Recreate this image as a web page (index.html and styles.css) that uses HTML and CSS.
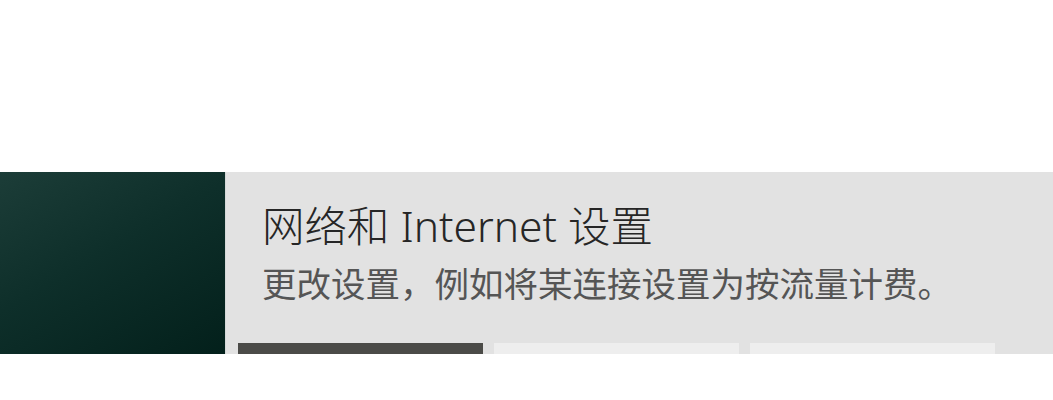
FILE: index.html
```html
<!DOCTYPE html>
<html lang="zh-CN">
<head>
<meta charset="utf-8">
<title>网络和 Internet 设置</title>
<link rel="stylesheet" href="styles.css">
</head>
<body>
<div class="top-space"></div>
<section class="banner">
  <div class="hero"></div>
  <div class="content">
    <h1 class="title">网络和 Internet 设置</h1>
    <p class="subtitle">更改设置，例如将某连接设置为按流量计费。</p>
    <div class="tiles">
      <div class="tile tile-dark"></div>
      <div class="tile tile-light"></div>
      <div class="tile tile-light"></div>
    </div>
  </div>
</section>
</body>
</html>
```
FILE: styles.css
```css
html, body {
  margin: 0;
  padding: 0;
  background: #ffffff;
}
body {
  width: 1053px;
  height: 400px;
  overflow: hidden;
  font-family: "Noto Sans", "Noto Sans CJK SC", sans-serif;
}
.top-space {
  height: 172px;
}
.banner {
  display: flex;
  height: 182px;
}
.hero {
  width: 225px;
  flex: none;
  background: linear-gradient(150deg, #1c3d38 0%, #0e2f2a 45%, #03201b 100%);
  border-right: 1px solid #d4d8d7;
}
.content {
  flex: 1;
  background: #e2e2e2;
  padding-left: 36px;
  display: flex;
  flex-direction: column;
  overflow: hidden;
}
.title {
  margin: 26px 0 0 0;
  font-size: 42.5px;
  font-weight: 300;
  line-height: 56px;
  color: #262626;
  white-space: nowrap;
}
.subtitle {
  margin: 8px 0 0 0;
  font-size: 34.5px;
  font-weight: 400;
  line-height: 44px;
  color: #555555;
  white-space: nowrap;
}
.tiles {
  margin-top: auto;
  margin-left: -24px;
  display: flex;
  gap: 11px;
  height: 11px;
}
.tile {
  width: 245px;
  height: 11px;
  flex: none;
}
.tile-dark {
  background: #4b4b48;
}
.tile-light {
  background: #eeeeee;
}
```
